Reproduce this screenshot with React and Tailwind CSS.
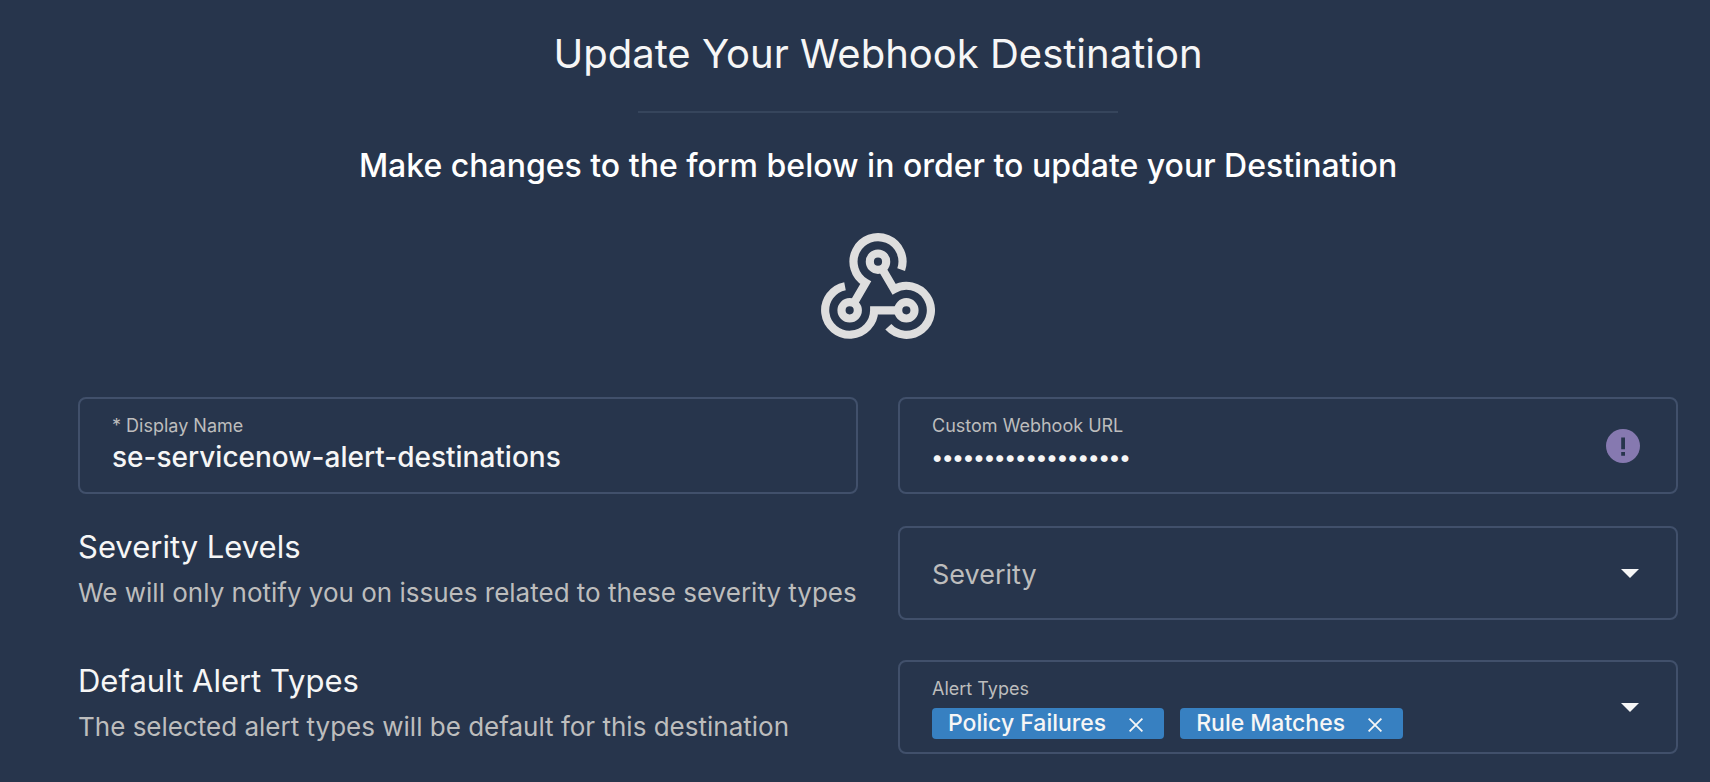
import { useState } from "react";

function WebhookIcon() {
  return (
    <svg
      viewBox="63 53 342 318"
      className="h-[106px] w-[114px]"
      fill="none"
      stroke="#dedede"
      strokeWidth="24.5"
      strokeLinejoin="miter"
      aria-hidden="true"
    >
      <path d="M135 212.5A73.5 73.5 0 1 0 222.5 285H296" />
      <path d="M303.5 163A73.5 73.5 0 1 0 197 202.5L161 264" />
      <path d="M265 334.5A73.5 73.5 0 1 0 282 221.5L246 160" />
      <circle cx="234" cy="139" r="24.5" />
      <circle cx="149" cy="285" r="24.5" />
      <circle cx="319" cy="285" r="24.5" />
    </svg>
  );
}

function Caret() {
  return (
    <svg viewBox="0 0 18 9" className="h-[9px] w-[18px]" aria-hidden="true">
      <path d="M0 0h18L9 9z" fill="#f6f6f6" />
    </svg>
  );
}

function AlertIcon() {
  return (
    <svg viewBox="0 0 34 34" className="size-[34px] shrink-0" role="img" aria-label="Notice">
      <circle cx="17" cy="17" r="17" fill="#8679b0" />
      <path d="M15.2 8.5h3.8v11.7h-3.8zM15.2 23h3.8v3.7h-3.8z" fill="#27354c" />
    </svg>
  );
}

function TextField({ id, label, type, defaultValue, inputClass, children }) {
  return (
    <div className="flex items-center rounded-lg border-2 border-[#41506b] py-[15px] pr-9 pl-8">
      <div className="min-w-0 grow pb-0.5">
        <label htmlFor={id} className="block text-[18px] leading-6 text-[#bdbdbd]">
          {label}
        </label>
        <input
          id={id}
          type={type}
          defaultValue={defaultValue}
          className={`mt-px block h-9 w-full bg-transparent text-[#f6f6f6] outline-none ${inputClass}`}
        />
      </div>
      {children}
    </div>
  );
}

function Description({ title, text }) {
  return (
    <div className="pt-px">
      <h3 className="text-[31px] leading-10 text-[#f6f6f6]">{title}</h3>
      <p className="mt-2 text-[26px] leading-9 whitespace-nowrap text-[#bdbdbd]">{text}</p>
    </div>
  );
}

function Chip({ label, onRemove }) {
  return (
    <li className="flex h-[31px] items-center gap-[23px] rounded bg-[#3780c1] pr-[21px] pl-4 text-[23px] leading-[31px] font-medium text-[#f6f6f6]">
      {label}
      <button type="button" aria-label={`Remove ${label}`} onClick={onRemove} className="mt-1">
        <svg viewBox="0 0 14 14" className="size-3.5" stroke="#f6f6f6" strokeWidth="1.8" aria-hidden="true">
          <path d="M.6.6l12.8 12.8M13.4.6L.6 13.4" />
        </svg>
      </button>
    </li>
  );
}

export default function App() {
  const [types, setTypes] = useState(["Policy Failures", "Rule Matches"]);

  return (
    <main className="min-h-screen bg-[#27354c] pt-[30px] pr-8 pb-7 pl-[78px] font-['Inter',sans-serif]">
      <header className="flex flex-col items-center text-center">
        <h1 className="text-[40px] leading-[48px] text-[#f6f6f6]">Update Your Webhook Destination</h1>
        <hr className="mt-[33px] w-[480px] border-t-2 border-[#36455c]" />
        <h2 className="mt-[33px] mb-[47px] text-[32px] leading-10 font-medium text-white">
          Make changes to the form below in order to update your Destination
        </h2>
        <WebhookIcon />
      </header>

      <form className="mt-[58px]">
        <div className="grid grid-cols-2 gap-10">
          <TextField
            id="display-name"
            label="* Display Name"
            type="text"
            defaultValue="se-servicenow-alert-destinations"
            inputClass="text-[28px] font-medium"
          />
          <TextField
            id="webhook-url"
            label="Custom Webhook URL"
            type="password"
            defaultValue="https://hooks.test/"
            inputClass="text-[22px] font-bold"
          >
            <AlertIcon />
          </TextField>
        </div>

        <div className="mt-8 grid grid-cols-2 gap-10">
          <Description
            title="Severity Levels"
            text="We will only notify you on issues related to these severity types"
          />
          <div className="relative">
            <select
              aria-label="Severity"
              defaultValue=""
              className="block h-[94px] w-full appearance-none rounded-lg border-2 border-[#41506b] bg-transparent px-8 pt-1 text-[27px] text-[#bdbdbd] outline-none"
            >
              <option value="">Severity</option>
              <option>Critical</option>
              <option>High</option>
              <option>Low</option>
            </select>
            <span className="pointer-events-none absolute inset-y-0 right-[39px] flex items-center">
              <Caret />
            </span>
          </div>
        </div>

        <div className="mt-10 grid grid-cols-2 gap-10">
          <Description
            title="Default Alert Types"
            text="The selected alert types will be default for this destination"
          />
          <div className="flex h-[94px] items-center justify-between rounded-lg border-2 border-[#41506b] pr-[37px] pl-8">
            <div role="group" aria-labelledby="alert-types" className="pt-px">
              <div id="alert-types" className="text-[18px] leading-6 text-[#bdbdbd]">
                Alert Types
              </div>
              <ul className="mt-[7px] flex gap-4">
                {types.map((type) => (
                  <Chip
                    key={type}
                    label={type}
                    onRemove={() => setTypes(types.filter((item) => item !== type))}
                  />
                ))}
              </ul>
            </div>
            <button type="button" aria-label="Show alert types">
              <Caret />
            </button>
          </div>
        </div>
      </form>
    </main>
  );
}
